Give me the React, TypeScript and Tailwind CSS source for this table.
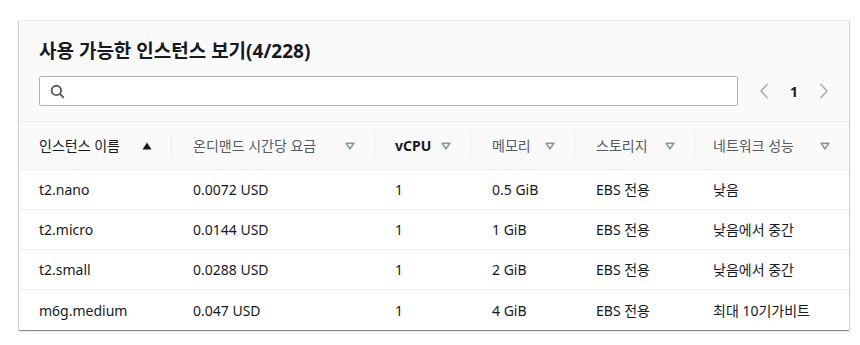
import React from "react";

const font = { fontFamily: '"Noto Sans", "Noto Sans CJK KR", sans-serif' };

type Col = { label: string; w: string; sort: "asc" | "none"; bold?: boolean; sep: boolean; pl: string };

const cols: Col[] = [
  { label: "인스턴스 이름", w: "w-[153px]", sort: "asc", bold: false, sep: true, pl: "pl-5" },
  { label: "온디맨드 시간당 요금", w: "w-[203px]", sort: "none", sep: true, pl: "pl-[21px]" },
  { label: "vCPU", w: "w-[96px]", sort: "none", bold: true, sep: true, pl: "pl-5" },
  { label: "메모리", w: "w-[104px]", sort: "none", sep: true, pl: "pl-[21px]" },
  { label: "스토리지", w: "w-[120px]", sort: "none", sep: true, pl: "pl-[21px]" },
  { label: "네트워크 성능", w: "flex-1", sort: "none", sep: false, pl: "pl-[18px]" },
];

const rows = [
  ["t2.nano", "0.0072 USD", "1", "0.5 GiB", "EBS 전용", "낮음"],
  ["t2.micro", "0.0144 USD", "1", "1 GiB", "EBS 전용", "낮음에서 중간"],
  ["t2.small", "0.0288 USD", "1", "2 GiB", "EBS 전용", "낮음에서 중간"],
  ["m6g.medium", "0.047 USD", "1", "4 GiB", "EBS 전용", "최대 10기가비트"],
];

function SortDown() {
  return (
    <svg width="10" height="8" viewBox="0 0 10 8">
      <path d="M1 1.2 H9 L5 7 Z" fill="#eaeded" stroke="#879596" strokeWidth="1.4" strokeLinejoin="round" />
    </svg>
  );
}
function SortUp() {
  return (
    <svg width="10" height="8" viewBox="0 0 10 8">
      <path d="M0.5 7.5 H9.5 L5 0.5 Z" fill="#16191f" />
    </svg>
  );
}

export default function App() {
  return (
    <div className="w-[860px] h-[345px] bg-white pt-5 pl-[19px]" style={font}>
      <div className="w-[830px] bg-white border-t border-[#eaeded] shadow-[0_1px_1px_0_rgba(0,28,36,0.3),1px_1px_1px_0_rgba(0,28,36,0.15),-1px_1px_1px_0_rgba(0,28,36,0.15)]">
        <div className="bg-[#fafafa] border-b border-[#eaeded] px-5 pt-[15px] pb-[15px]">
          <div className="text-[19px] leading-[30px] font-bold text-[#16191f]">사용 가능한 인스턴스 보기(4/228)</div>
          <div className="flex items-center mt-[10px]">
            <div className="w-[700px] h-[30px] border border-[#aab7b8] bg-white rounded-[2px] flex items-center pl-[10px]">
              <svg width="15" height="15" viewBox="0 0 16 16" fill="none" stroke="#545b64" strokeWidth="2" strokeLinecap="round">
                <circle cx="6.8" cy="6.8" r="5" />
                <path d="M10.6 10.6 L14.2 14.2" />
              </svg>
            </div>
            <div className="flex items-center ml-[21px] gap-[21px]">
              <svg width="10" height="16" viewBox="0 0 10 16" fill="none" stroke="#aab7b8" strokeWidth="1.8" strokeLinecap="round" strokeLinejoin="round">
                <path d="M8 1.5 L2 8 L8 14.5" />
              </svg>
              <span className="text-[14px] font-bold text-[#16191f]">1</span>
              <svg width="10" height="16" viewBox="0 0 10 16" fill="none" stroke="#aab7b8" strokeWidth="1.8" strokeLinecap="round" strokeLinejoin="round">
                <path d="M2 1.5 L8 8 L2 14.5" />
              </svg>
            </div>
          </div>
        </div>
        <div className="flex h-[48px] bg-[#fafafa] border-b border-[#eaeded]">
          {cols.map((c, i) => (
            <div key={i} className={`${c.w} flex items-center`}>
              <div className={`flex-1 flex items-center justify-between ${c.pl} pr-[19px]`}>
                <span className={`text-[14px] ${c.bold || i === 0 ? "text-[#16191f]" : "text-[#545b64]"} ${c.bold ? "font-bold" : ""}`}>{c.label}</span>
                {c.sort === "asc" ? <SortUp /> : <SortDown />}
              </div>
              {c.sep && <div className="w-px h-[23px] bg-[#eaeded]" />}
            </div>
          ))}
        </div>
        {rows.map((r, ri) => (
          <div key={ri} className={`flex h-[40px] bg-white ${ri < rows.length - 1 ? "border-b border-[#eaeded]" : ""}`}>
            {r.map((cell, ci) => (
              <div key={ci} className={`${cols[ci].w} flex items-center ${cols[ci].pl} text-[14px] text-[#16191f]`}>
                {cell}
              </div>
            ))}
          </div>
        ))}
      </div>
    </div>
  );
}
